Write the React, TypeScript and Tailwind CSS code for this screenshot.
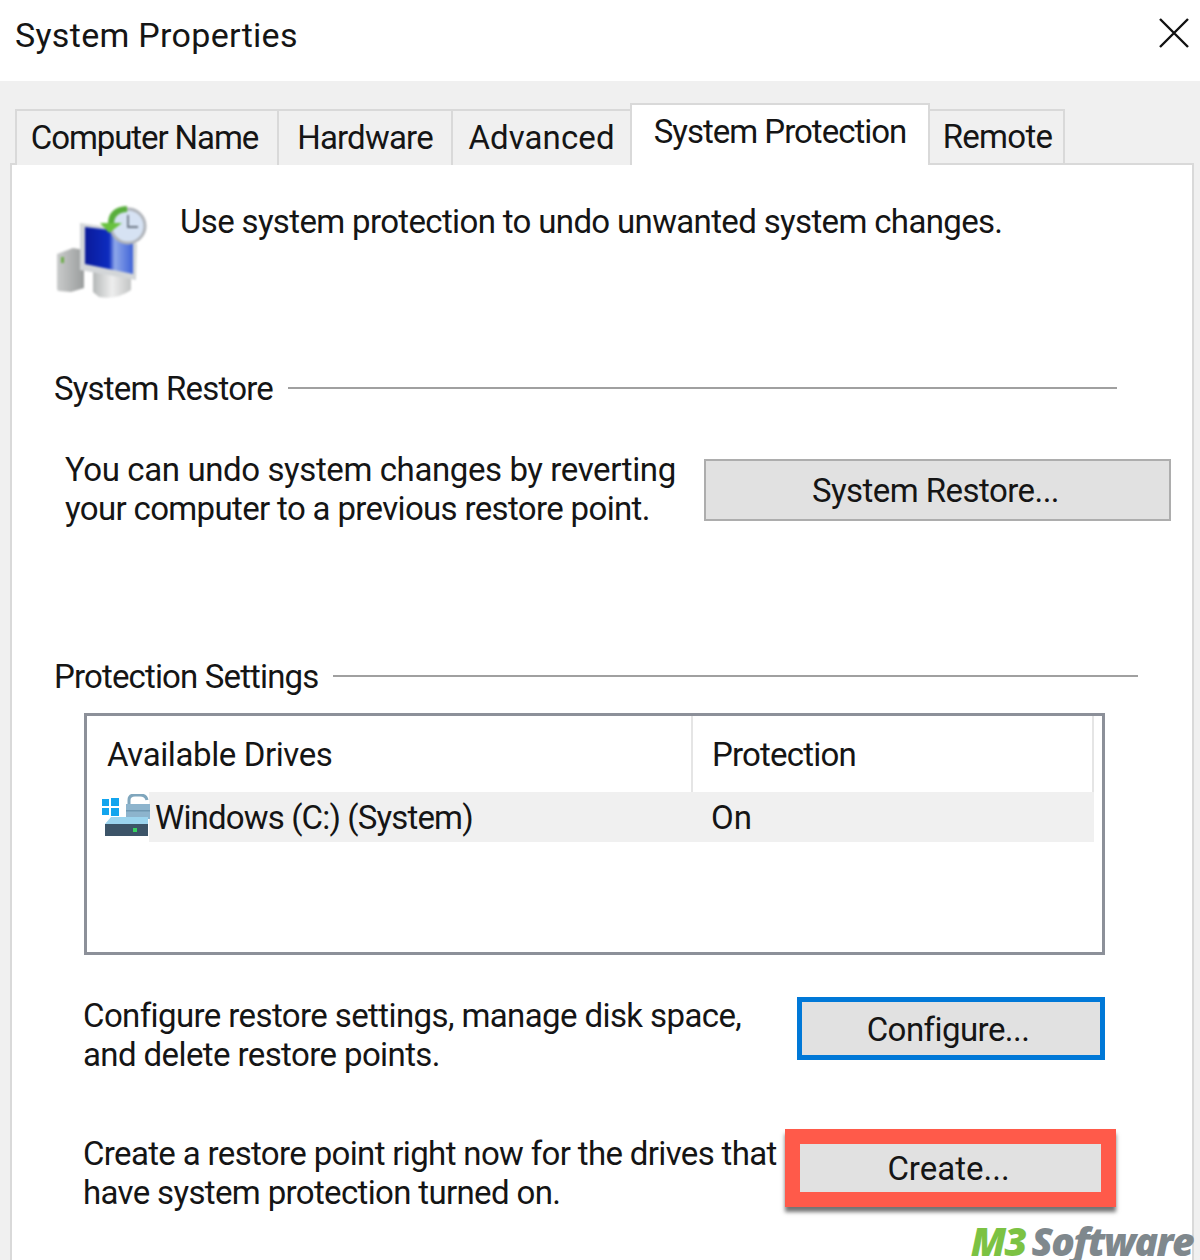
const tabs = [
  { label: 'Computer Name', width: 'w-[262px]', tracking: 'tracking-[-1.1px] pr-[5px]' },
  { label: 'Hardware', width: 'w-[174px]', tracking: 'tracking-[-0.8px]' },
  { label: 'Advanced', width: 'w-[179px]', tracking: 'tracking-[0.1px]' },
];

const SystemIcon = () => (
  <svg width="96" height="96" viewBox="0 0 96 96" className="shrink-0 blur-[0.8px]">
    <defs>
      <linearGradient id="screen" x1="0" y1="0" x2="1" y2="0">
        <stop offset="0" stopColor="#0a1a9a" />
        <stop offset="0.5" stopColor="#0d2cc0" />
        <stop offset="0.62" stopColor="#8fa8ea" />
        <stop offset="1" stopColor="#3f63d8" />
      </linearGradient>
      <linearGradient id="tower" x1="0" y1="0" x2="1" y2="0">
        <stop offset="0" stopColor="#c9cbcb" />
        <stop offset="1" stopColor="#9a9d9d" />
      </linearGradient>
      <linearGradient id="stand" x1="0" y1="0" x2="1" y2="0">
        <stop offset="0" stopColor="#b5b8b8" />
        <stop offset="0.5" stopColor="#eeeeee" />
        <stop offset="1" stopColor="#c2c4c4" />
      </linearGradient>
    </defs>
    <path d="M2 50 L18 44 L29 46 L29 84 L16 88 L4 87 Q2 87 2 84 Z" fill="url(#tower)" />
    <rect x="6" y="53" width="3" height="6" fill="#6fae4c" />
    <path d="M38 66 L76 72 L76 86 Q62 96 44 93 L38 88 Z" fill="url(#stand)" />
    <path d="M25 19 L60 24 L82 40 L81 76 L25 66 Z" fill="#d3d6d8" />
    <path d="M30 23 L55 26 L78 38 L78 70 L30 60 Z" fill="url(#screen)" />
    <circle cx="73" cy="22" r="17" fill="#d6e2f3" stroke="#b0b4ba" strokeWidth="3" />
    <path d="M73 11 V23 H83" fill="none" stroke="#6d7785" strokeWidth="1.8" />
    <path d="M56 20 Q56 6 72 5" fill="none" stroke="#58ae3c" strokeWidth="6" />
    <path d="M45 19 L67 19 L54 29 Z" fill="#68c23f" />
  </svg>
);

const DriveIcon = () => (
  <svg width="48" height="46" viewBox="0 0 48 46" className="shrink-0 blur-[0.5px]">
    <rect x="0" y="5" width="7" height="7" fill="#12a5ee" />
    <rect x="9" y="4" width="8" height="8" fill="#12a5ee" />
    <rect x="0" y="14" width="7" height="7" fill="#12a5ee" />
    <rect x="9" y="14" width="8" height="8" fill="#12a5ee" />
    <path d="M27 10 V6 Q27 1 33 1 H38 Q44 1 45 6" fill="none" stroke="#7fa6bd" strokeWidth="3" />
    <rect x="24" y="10" width="24" height="15" fill="#8db4cd" />
    <rect x="24" y="16" width="24" height="1.5" fill="#6f97b1" />
    <path d="M9 23 H46 V30 H3 Z" fill="#9bd4ee" />
    <rect x="3" y="30" width="43" height="12" fill="#3c5468" />
    <rect x="31" y="34" width="4" height="4" fill="#35d25f" />
  </svg>
);

const Section = ({ title, lineClass, tracking }: { title: string; lineClass: string; tracking: string }) => (
  <div className="flex items-center ml-[42px] h-[40px]">
    <span className={`whitespace-nowrap ${tracking}`}>{title}</span>
    <div className={`h-[2px] bg-[#a0a0a0] ${lineClass}`}></div>
  </div>
);

export default function App() {
  return (
    <div className="w-[1200px] h-[1260px] overflow-hidden relative flex flex-col bg-white text-[33px] leading-[39px] text-[#151515] font-['Roboto','Liberation_Sans',sans-serif] font-normal">
      {/* title bar */}
      <div className="h-[81px] shrink-0 flex items-start justify-between pl-[15px] pr-[10px] bg-white">
        <span className="mt-[16px] text-[34px] tracking-[0.3px]">System Properties</span>
        <svg width="32" height="32" viewBox="0 0 32 32" className="mt-[17px]">
          <path d="M2 2 L30 30 M30 2 L2 30" stroke="#111" strokeWidth="2.4" fill="none" />
        </svg>
      </div>

      <div className="flex-1 bg-[#f0f0f0] flex flex-col pl-[10px] pr-[6px]">
        {/* tab strip */}
        <div className="flex items-end h-[84px] pl-[5px] relative z-10 -mb-[2px]">
          {tabs.map((tab) => (
            <div
              key={tab.label}
              className={`${tab.width} ${tab.tracking} h-[56px] pb-[2px] flex items-center justify-center border-t-2 border-l-2 border-[#d9d9d9] bg-[#f0f0f0] whitespace-nowrap`}
            >
              {tab.label}
            </div>
          ))}
          <div className="w-[300px] h-[62px] flex items-start justify-center pt-[7px] border-t-2 border-x-2 border-[#d9d9d9] bg-white whitespace-nowrap tracking-[-1px]">
            System Protection
          </div>
          <div className="w-[135px] h-[56px] pb-[2px] pl-[2px] flex items-center justify-center border-t-2 border-r-2 border-b-2 border-[#d9d9d9] bg-[#f0f0f0] tracking-[-0.7px]">
            Remote
          </div>
        </div>

        {/* tab page */}
        <div className="flex-1 bg-white border-2 border-b-0 border-[#d9d9d9] flex flex-col">
          <div className="flex items-start pl-[43px] pt-[39px] h-[203px]">
            <SystemIcon />
            <span className="ml-[29px] mt-[-2px] whitespace-nowrap tracking-[-0.65px]">
              Use system protection to undo unwanted system changes.
            </span>
          </div>

          <Section title="System Restore" lineClass="w-[829px] ml-[15px]" tracking="tracking-[-0.8px]" />

          <div className="flex items-start mt-[51px] h-[197px] shrink-0">
            <p className="ml-[53px] w-[639px] -mt-[9px] whitespace-nowrap">
              <span className="tracking-[-0.4px]">You can undo system changes by reverting</span>
              <br />
              <span className="tracking-[-0.65px]">your computer to a previous restore point.</span>
            </p>
            <button className="w-[467px] h-[62px] pr-[4px] bg-[#e1e1e1] border-2 border-[#adadad] tracking-[-0.55px]">
              System Restore...
            </button>
          </div>

          <Section title="Protection Settings" lineClass="w-[805px] ml-[15px]" tracking="tracking-[-0.85px]" />

          {/* drive list */}
          <div className="ml-[72px] mt-[17px] w-[1021px] h-[242px] border-[3px] border-[#8c9099] bg-white flex flex-col pr-[8px] shrink-0">
            <div className="flex h-[76px] shrink-0 border-r-2 border-[#e5e5e5]">
              <div className="w-[606px] pl-[20px] pt-[19px] border-r-2 border-[#e5e5e5] tracking-[-0.4px]">Available Drives</div>
              <div className="pl-[19px] pt-[19px] tracking-[-0.8px]">Protection</div>
            </div>
            <div className="flex items-center h-[50px] shrink-0">
              <div className="w-[62px] pl-[15px] flex items-center h-[50px]">
                <DriveIcon />
              </div>
              <div className="flex-1 h-full flex items-center bg-[#f0f0f0]">
                <span className="w-[562px] pl-[6px] tracking-[-0.85px]">Windows (C:) (System)</span>
                <span>On</span>
              </div>
            </div>
          </div>

          <div className="flex items-start mt-[42px] h-[132px] shrink-0">
            <p className="ml-[71px] w-[714px] -mt-[2px] pt-[1px] whitespace-nowrap tracking-[-0.6px]">
              Configure restore settings, manage disk space,
              <br />
              and delete restore points.
            </p>
            <button className="w-[308px] h-[63px] pr-[6px] pt-[2px] bg-[#e1e1e1] border-[5px] border-[#0078d7] tracking-[-0.55px]">
              Configure...
            </button>
          </div>

          <div className="flex items-start">
            <p className="ml-[71px] w-[702px] mt-[5px] whitespace-nowrap tracking-[-0.65px]">
              Create a restore point right now for the drives that
              <br />
              have system protection turned on.
            </p>
            <button className="w-[331px] h-[78px] pr-[4px] bg-[#e1e1e1] border-[15px] border-[#ff5a4a] shadow-[0_5px_4px_rgba(0,0,0,0.55)]">
              Create...
            </button>
          </div>
        </div>
      </div>

      {/* watermark */}
      <div className="absolute right-[7px] bottom-[2px] text-[39px] leading-[34px] italic font-extrabold tracking-[-1.6px] font-['Open_Sans','Liberation_Sans',sans-serif] whitespace-nowrap">
        <span className="text-[#7cc243]">M3</span>
        <span className="text-[#7f888d] ml-[6px]">Software</span>
      </div>
    </div>
  );
}
